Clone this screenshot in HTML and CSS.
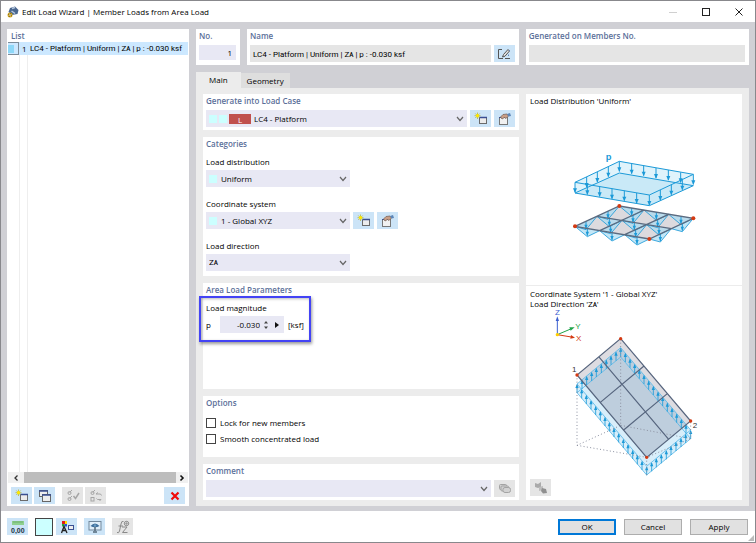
FILE: index.html
```html
<!DOCTYPE html>
<html lang="en">
<head>
<meta charset="utf-8">
<title>Edit Load Wizard | Member Loads from Area Load</title>
<link rel="stylesheet" href="styles.css">
</head>
<body>
<svg class="defs" aria-hidden="true">
  <defs>
    <marker id="down" markerUnits="userSpaceOnUse" markerWidth="12" markerHeight="34" refX="0" refY="0" overflow="visible"><path d="M0 0V30" stroke="#1c9ad8" stroke-width="3"/><path d="M-6 18H6L0 32Z" fill="#1c9ad8"/></marker>
    <marker id="drop" markerUnits="userSpaceOnUse" markerWidth="12" markerHeight="26" refX="0" refY="0" overflow="visible"><path d="M0 0V22" stroke="#1c9ad8" stroke-width="3"/><path d="M-5 10H5L0 23Z" fill="#1c9ad8"/></marker>
    <marker id="up" markerUnits="userSpaceOnUse" markerWidth="10" markerHeight="28" refX="0" refY="0" overflow="visible"><path d="M0 2V27" stroke="#1c9ad8" stroke-width="2.5"/><path d="M-5 12H5L0 0Z" fill="#1c9ad8"/></marker>
    <symbol id="new" viewBox="0 0 14 14"><rect x="5.5" y="5.5" width="7" height="6" fill="#ececec" stroke="#6b6b6b"/><path d="M5 5.500H13" stroke="#3a4f93" stroke-width="1.500"/><path d="M3.500 .5V7M.5 3.700H6.500M1.300 1.500L5.700 6M5.700 1.500L1.300 6" stroke="#b5b53c" stroke-width=".8"/><circle cx="3.500" cy="3.700" r="1.600" fill="#ffe900"/></symbol>
    <symbol id="edit" viewBox="0 0 14 14"><rect x="1.500" y="5.500" width="8" height="7" fill="#f1f1f1" stroke="#777"/><path d="M1 5.500H8" stroke="#3a4f93"/><path d="M2.500 5L5 2.500L9 2L10.500 4L8 6.500L6.500 5.500L4 7Z" fill="#c99e86" stroke="#6e5a50" stroke-width=".7"/><path d="M9 2L12 1L13 4L10.500 4.500Z" fill="#5d86b8"/></symbol>
    <symbol id="chev" viewBox="0 0 8 6"><path d="M1 1L4 4.500L7 1" fill="none" stroke="#666" stroke-width="1.200"/></symbol>
  </defs>
</svg>
<div class="window">
  <header class="titlebar">
    <svg class="app-icon" viewBox="0 0 12 12"><path d="M3 2L8 .5L11.500 4L10.500 8L5 9L1.500 6Z" fill="#49668f"/><path d="M5 2.500L8 1.500M4.500 5L8 7.500" stroke="#b5c7dd" stroke-width="1.500"/><circle cx="3" cy="9" r="2.500" fill="#d7ad27"/><path d="M1 8L5 10M4 7L2 11" stroke="#836713"/><circle cx="3" cy="9" r=".8" fill="#fff"/></svg>
    <h1>Edit Load Wizard | Member Loads from Area Load</h1>
    <div class="win-controls">
      <button aria-label="Minimize" disabled><svg viewBox="0 0 8 8"><path d="M0 4.500H8" stroke="#d0d0d0"/></svg></button>
      <button aria-label="Maximize"><svg viewBox="0 0 8 8"><rect x=".5" y=".5" width="7" height="7" fill="none" stroke="#222"/></svg></button>
      <button aria-label="Close"><svg viewBox="0 0 8 8"><path d="M.5 .5L7.500 7.500M7.500 .5L.5 7.500" stroke="#222"/></svg></button>
    </div>
  </header>

  <main class="content">
    <section class="list-panel">
      <h2>List</h2>
      <ul class="list">
        <li class="row"><span class="mark"></span><span class="num">1</span><span class="entry">LC4 - Platform | Uniform | Zᴀ | p : -0.030 ksf</span></li>
      </ul>
      <div class="scroll">
        <button aria-label="Scroll left"><svg viewBox="0 0 6 8"><path d="M4.500 1.500L2 4L4.500 6.500" fill="none" stroke="#333" stroke-width="1.300"/></svg></button>
        <div class="thumb"></div>
        <button aria-label="Scroll right"><svg viewBox="0 0 6 8"><path d="M1.500 1.500L4 4L1.500 6.500" fill="none" stroke="#111" stroke-width="1.600"/></svg></button>
      </div>
      <div class="toolbar">
        <button class="tool" aria-label="New"><svg><use href="#new"/></svg></button>
        <button class="tool" aria-label="Copy"><svg viewBox="0 0 14 14"><rect x="1.500" y="1.500" width="8" height="6" fill="#eee" stroke="#666"/><path d="M1 2H10" stroke="#3a4f93" stroke-width="1.500"/><rect x="4.500" y="5.500" width="8" height="7" fill="#eee" stroke="#666"/><path d="M4 6H13" stroke="#3a4f93" stroke-width="1.500"/></svg></button>
        <button class="tool off spaced" aria-label="Select all" disabled><svg viewBox="0 0 14 14" fill="none" stroke="#a5a5a5"><circle cx="3.500" cy="4" r="1.500"/><circle cx="3.500" cy="10" r="1.500"/><path d="M3.500 3.500L6 1M3.500 9.500L6 7"/><path d="M7.500 7L9.500 9.500L13 4" stroke-width="1.500"/></svg></button>
        <button class="tool off" aria-label="Invert selection" disabled><svg viewBox="0 0 14 14" fill="none" stroke="#a5a5a5"><circle cx="3.500" cy="4" r="1.500"/><path d="M3.500 3.500L6 1"/><rect x="2" y="8.500" width="3" height="3.500"/><path d="M7 5L9 3.500M7 5H11.500L12.500 6.500M7.500 9.500L8.500 10.500H12L10.500 12"/></svg></button>
        <button class="tool last" aria-label="Delete"><svg viewBox="0 0 14 14"><path d="M3.500 3.500L10.500 10.500M10.500 3.500L3.500 10.500" stroke="#f00a0a" stroke-width="2.200"/></svg></button>
      </div>
    </section>

    <div class="detail">
      <div class="head">
        <section class="card no"><h2><label for="no">No.</label></h2><input id="no" class="num-input" value="1"></section>
        <section class="card title-card"><h2><label for="name">Name</label></h2>
          <div class="line"><input id="name" class="readonly entry" value="LC4 - Platform | Uniform | Zᴀ | p : -0.030 ksf" readonly>
          <button class="tool" aria-label="Edit name"><svg viewBox="0 0 14 14" fill="none" stroke="#555"><path d="M5 2.500H1.500V11.500H6M8 11.500H13"/><path d="M5.500 10L6.500 7.500L11 2.500L12.500 4L8 9.200Z" fill="#e4e4e4"/><path d="M11.500 9V7.500M12.500 4V3" stroke="#6789b8"/></svg></button></div>
        </section>
        <section class="card members"><h2><label for="members">Generated on Members No.</label></h2><input id="members" class="readonly" readonly></section>
      </div>

      <nav class="tabs"><button class="tab active">Main</button><button class="tab">Geometry</button></nav>

      <div class="page">
        <div class="forms">
          <section class="card">
            <h2><label for="case">Generate into Load Case</label></h2>
            <div class="line">
              <div class="combo grow"><i class="sw"></i><i class="sw"></i><b class="badge">L</b><select id="case"><option>LC4 - Platform</option></select><svg><use href="#chev"/></svg></div>
              <button class="tool" aria-label="New load case"><svg><use href="#new"/></svg></button>
              <button class="tool" aria-label="Edit load case"><svg><use href="#edit"/></svg></button>
            </div>
          </section>
          <section class="card categories">
            <h2>Categories</h2>
            <div class="field"><label for="dist">Load distribution</label>
              <div class="combo"><i class="sw"></i><select id="dist"><option>Uniform</option></select><svg><use href="#chev"/></svg></div></div>
            <div class="field"><label for="cs">Coordinate system</label>
              <div class="line"><div class="combo"><i class="sw"></i><select id="cs"><option>1 - Global XYZ</option></select><svg><use href="#chev"/></svg></div>
              <button class="tool" aria-label="New coordinate system"><svg><use href="#new"/></svg></button>
              <button class="tool" aria-label="Edit coordinate system"><svg><use href="#edit"/></svg></button></div></div>
            <div class="field"><label for="dir">Load direction</label>
              <div class="combo"><select id="dir" class="entry"><option>Zᴀ</option></select><svg><use href="#chev"/></svg></div></div>
          </section>
          <section class="card params">
            <h2>Area Load Parameters</h2>
            <div class="magnitude">
              <div>Load magnitude</div>
              <div class="value"><label for="p">p</label>
                <div class="spin"><input id="p" value="-0.030"><button aria-label="Step"><svg viewBox="0 0 6 10"><path d="M1 3.500L3 1L5 3.500ZM1 6.500L3 9L5 6.500Z" fill="#444"/></svg></button><button aria-label="More"><svg viewBox="0 0 6 10"><path d="M1 2L5 5L1 8Z" fill="#111"/></svg></button></div>
                <span>[ksf]</span></div>
            </div>
          </section>
          <section class="card options">
            <h2>Options</h2>
            <label><input type="checkbox">Lock for new members</label>
            <label><input type="checkbox">Smooth concentrated load</label>
          </section>
          <section class="card">
            <h2><label for="comment">Comment</label></h2>
            <div class="line">
              <div class="combo grow"><select id="comment"><option></option></select><svg><use href="#chev"/></svg></div>
              <button class="tool off" aria-label="Comment library" disabled><svg viewBox="0 0 14 14" fill="#d2d2d2" stroke="#a3a3a3"><rect x="1.500" y="2.500" width="7" height="5" rx="1"/><rect x="3" y="4" width="7.500" height="5" rx="1"/><rect x="5" y="5.500" width="7.500" height="5" rx="2"/></svg></button>
            </div>
          </section>
        </div>

        <aside class="preview">
          <figure class="dist">
            <figcaption>Load Distribution 'Uniform'</figcaption>
            <svg viewBox="0 0 450 315">
              <text x="137" y="45" class="p">p</text>
              <g fill="none" stroke="#1c9ad8" stroke-width="3">
                <path d="M45 112L178 49L400 88V122L268 182L45 144Z" fill="#e0f3fb" stroke="none"/>
                <path d="M45 144L178 84L400 122L268 182Z" fill="#c9e9f7"/>
                <path d="M45 112L178 49L400 88L268 150Z"/>
                <path d="M45 112L80 96L112 81L145 65L178 49L215 56L251 62L288 69L325 75L362 82L400 88L367 104L334 119L301 135L268 150L230 144L193 137L156 131L119 124L82 118Z" stroke="none" marker-start="url(#down)" marker-mid="url(#down)"/>
              </g>
              <path d="M45 244L178 183L400 220L268 282Z" fill="#dcdade"/>
              <path d="M178 183L215 214L252 195L289 226L326 208L363 239L400 220M111 214L148 245L186 226L223 257L260 239L297 270L334 251M45 244L82 275L119 257L156 288L194 269L231 300L268 282M45 244L78 254L111 214L144 223L178 183M119 257L152 266L186 226L219 235L252 195M194 269L227 279L260 239L293 248L326 208M268 282L301 291L334 251L367 260L400 220" fill="#a9dcf2" fill-opacity=".7" stroke="#1c9ad8" stroke-width="2.500"/>
              <path d="M215 189L289 201L363 214L148 220L223 232L297 245L82 250L156 263L231 275L78 229L144 198L152 241L219 210L227 254L293 223L301 266L367 235" fill="none" marker-start="url(#drop)" marker-mid="url(#drop)" marker-end="url(#drop)"/>
              <path d="M45 244L178 183L400 220L268 282ZM111 214L334 251M119 257L252 195M194 269L326 208" fill="none" stroke="#5b6b80" stroke-width="4"/>
              <g fill="#d43a12"><circle cx="45" cy="244" r="6"/><circle cx="178" cy="183" r="6"/><circle cx="400" cy="220" r="6"/><circle cx="268" cy="282" r="6"/></g>
            </svg>
          </figure>
          <figure class="coord">
            <figcaption>Coordinate System '1 - Global XYZ'<br>Load Direction <span class="entry">'Zᴀ'</span></figcaption>
            <svg viewBox="0 -60 480 510">
              <path d="M22 26V-20" stroke="#3c5fd0" stroke-width="3"/><path d="M17 -15H27L22 -29Z" fill="#3c5fd0"/>
              <path d="M22 26L62 9" stroke="#1fa34a" stroke-width="3"/><path d="M58 4L62 14L74 4Z" fill="#1fa34a"/>
              <path d="M22 26L64 33" stroke="#d43a12" stroke-width="3"/><path d="M63 27L61 38L75 35Z" fill="#d43a12"/>
              <circle cx="22" cy="26" r="5" fill="#ffcf00"/>
              <text x="15" y="-33" fill="#3c5fd0">Z</text><text x="76" y="8" fill="#1fa34a">Y</text><text x="78" y="45" fill="#d43a12">X</text>
              <path d="M212 65L422 312V338L290 447L81 200V174Z" fill="#d8eefa"/>
              <path d="M212 38L422 285L290 394L81 147Z" fill="#645f78" fill-opacity=".22"/>
              <g fill="none" stroke="#59b8e8" stroke-width="2.500">
                <path d="M212 65L422 312L290 421L81 174ZM212 93L422 338L290 447L81 200Z"/>
                <path d="M212 65L198 77L183 89L169 101L154 114L139 126L125 138L110 150L96 162L81 174L95 190L109 207L123 223L137 240L151 256L165 273L178 289L192 306L206 322L220 339L234 355L248 372L262 388L276 405L290 421L305 409L319 397L334 385L349 373L363 360L378 348L393 336L407 324L422 312L408 296L394 279L380 263L366 246L352 230L338 213L324 197L310 180L296 164L282 147L268 131L254 114L240 98L226 81" stroke="none" marker-start="url(#up)" marker-mid="url(#up)" marker-end="url(#up)"/>
              </g>
              <path d="M81 147V358L212 298V38M212 298L422 338V285M81 358L290 394L422 338M290 394V447" fill="none" stroke="#8b90a0" stroke-width="3" stroke-dasharray="3 7"/>
              <path d="M212 38L422 285L290 394L81 147ZM146 92L356 340M282 120L151 229M352 203L221 312" fill="none" stroke="#56657e" stroke-width="3.500"/>
              <g fill="#d43a12"><circle cx="212" cy="38" r="5"/><circle cx="81" cy="147" r="5"/><circle cx="422" cy="285" r="5"/><circle cx="290" cy="394" r="5"/></g>
              <text x="66" y="138" fill="#333">1</text><text x="428" y="307" fill="#333">2</text>
            </svg>
            <button class="tool off" aria-label="Preview settings" disabled><svg viewBox="0 0 14 14"><path d="M1 2L4 3L7 1V6L4 7L1 6Z" fill="#aaa"/><path d="M5 6L9 5V9L5 10Z" fill="#bdbdbd"/><path d="M8 7L12 8L13 12L9 12.500L7 10Z" fill="#8f8f8f"/></svg></button>
          </figure>
        </aside>
      </div>
    </div>
  </main>

  <footer class="footer">
    <button class="tool" aria-label="Units"><svg class="wide" viewBox="0 0 16 14"><rect x="2" y="1" width="12" height="4" fill="#8fd08f"/><path d="M4 1V3M6 1V3M8 1V3M10 1V3M12 1V3" stroke="#5c9c5c" stroke-width=".6"/><text x="1" y="13" class="units">0,00</text></svg></button>
    <button class="color" aria-label="Color"></button>
    <button class="tool" aria-label="Display"><svg viewBox="0 0 14 14"><path d="M2 1H5V4H2Z" fill="#e01818"/><path d="M5 1H7V4H5Z" fill="#ffe000"/><path d="M2 4H4.500V6.500H2Z" fill="#25a535"/><path d="M4.500 4H7V6.500H4.500Z" fill="#2850d8"/><path d="M1.500 13L4 6.500L7 13M2.500 10.500H6" fill="none" stroke="#222" stroke-width="1.300"/><rect x="8.500" y="5.500" width="5" height="4" fill="#eee" stroke="#3a4f93"/></svg></button>
    <button class="tool spaced" aria-label="View"><svg viewBox="0 0 14 14"><rect x="1" y="1.500" width="12" height="8.500" fill="#dfeefa" stroke="#71879c"/><path d="M2.500 6Q7 1 11.500 6Q7 8.500 2.500 6Z" fill="#3b6c9a"/><circle cx="7" cy="5.500" r="1.300" fill="#6a9cc4"/><path d="M7 7V11M5 12H9" stroke="#53687a" stroke-width="1.500"/></svg></button>
    <button class="tool off spaced" aria-label="Formula" disabled><svg viewBox="0 0 14 14" fill="none" stroke="#8a8a8a"><path d="M7.500 1.500Q5.500 .5 5 4L3.500 11Q3 13.500 1 12.500M2.500 6H7"/><path d="M6 7H11L6.500 12.500H11.500"/><circle cx="10.500" cy="3.500" r="2.200"/><path d="M8.500 3.500H12.500M10.500 1.500V5.500" stroke-width=".6"/></svg></button>
    <div class="actions"><button class="ok">OK</button><button>Cancel</button><button>Apply</button></div>
    <i class="grip"></i>
  </footer>
</div>
</body>
</html>
```
FILE: styles.css
```css
* { box-sizing: border-box; }
body { margin: 0; font: 500 8px/12px "Open Sans", "Noto Sans", sans-serif; color: #000; }
button, input, select { font: inherit; color: inherit; margin: 0; padding: 0; border: 0; border-radius: 0; background: none; min-width: 0; }
h1, h2, ul, figure { margin: 0; padding: 0; }
h2 { font-size: 8px; line-height: 12px; font-weight: 600; color: #5b6f99; }
svg { display: block; }
.defs { position: absolute; width: 0; height: 0; }

.window { display: flex; flex-direction: column; min-height: 100vh; border: 1px solid #88888c; background: #fff; }
.titlebar { display: flex; align-items: center; height: 21px; padding: 0 8px 0 6px; }
.app-icon { width: 12px; height: 12px; margin-right: 3px; }
h1 { flex: 1; font-size: 8px; font-weight: 500; }
.win-controls { display: flex; gap: 17px; }
.win-controls button { width: 16px; height: 16px; display: grid; place-items: center; }
.win-controls svg { width: 8px; height: 8px; }

.content { flex: 1; display: flex; gap: 7px; padding: 7px 6px 5px; background: #d0d0d5; }
.list-panel { flex: 0 0 182px; min-width: 0; display: flex; flex-direction: column; padding: 1px 1px 2px; background: #fff; }
.list-panel h2 { padding-left: 3px; }
.list { flex: 1; list-style: none; background: linear-gradient(90deg, transparent 11px, #eee 11px, #eee 12px, transparent 12px, transparent 19px, #eee 19px, #eee 20px, transparent 20px); }
.row { display: flex; align-items: center; height: 13px; overflow: hidden; background: #cce8ff; white-space: nowrap; }
.mark { flex: none; width: 11px; height: 13px; border: 1px solid #7d8c99; border-left: 0; background: #cce8ff linear-gradient(#8ed8f8, #8ed8f8) 0 2px / 6px 8px no-repeat; }
.num { flex: none; width: 11px; padding-left: 3px; }
.entry { font-family: Roboto, "Noto Sans", sans-serif; font-weight: 400; }
.scroll { display: flex; height: 11px; background: #f0f0f0; }
.scroll button { width: 16px; display: grid; place-items: center; }
.scroll button:last-child { width: 12px; }
.scroll svg { width: 6px; height: 8px; }
.thumb { flex: 1; background: #bdbdbd; }
.toolbar { display: flex; gap: 2px; padding: 4px 3px 0; }
.tool { flex: none; width: 21px; height: 17px; display: grid; place-items: center; background: #cce4f7; }
.tool svg { width: 14px; height: 14px; }
.tool svg.wide { width: 16px; }
.tool.off { background: #e5e5e5; }
.toolbar .spaced { margin-left: 5px; }
.toolbar .last { margin-left: auto; }

.detail { flex: 1; min-width: 0; display: flex; flex-direction: column; }
.head { display: flex; gap: 7px; }
.card { padding: 1px 4px 3px 3px; background: #fff; }
.card h2 { margin-bottom: 3px; }
.head input { display: block; width: 100%; }
.no { flex: 0 0 44px; }
.title-card { flex: 273 1 0; }
.members { flex: 223 1 0; }
.num-input { height: 15px; padding-right: 4px; text-align: right; background: #e8e8f4; }
.readonly { height: 17px; padding: 0 3px; background: #e5e5e5; }
.line { display: flex; gap: 3px; }

.tabs { display: flex; align-items: flex-end; height: 23px; }
.tab { height: 15px; padding: 0 6px; background: #dedede; }
.tab.active { height: 16px; padding: 0 13px; background: #ececec; }
.page { flex: 1; display: flex; gap: 7px; padding: 6px 7px 6px; background: #ececec; }
.forms { flex: 316 1 0; display: flex; flex-direction: column; gap: 7px; min-width: 0; }
.combo { position: relative; display: flex; align-items: center; width: 144px; height: 17px; padding-left: 3px; background: #e8e8f4; }
.combo.grow { flex: 1; }
.combo select { flex: 1; height: 17px; padding-right: 14px; appearance: none; }
.combo svg { position: absolute; right: 3px; width: 8px; height: 6px; pointer-events: none; }
.sw { width: 8px; height: 8px; margin-right: 2px; background: #ccffff; }
.sw + select { margin-left: 2px; }
.badge { width: 22px; height: 10px; margin-right: 3px; font-weight: 400; line-height: 11px; text-align: center; color: #fff; background: #c0504d; }
.categories { padding-bottom: 5px; }
.card.categories h2, .card.params h2 { margin-bottom: 6px; }
.field { display: flex; flex-direction: column; gap: 2px; }
.field + .field { margin-top: 11px; }
.params { flex: 1; }
.magnitude { position: relative; width: 98px; }
.magnitude::after { content: ""; position: absolute; inset: -6px -7px -9px; border: 2px solid #4343f5; box-shadow: 1px 2px 3px #0006, inset 1px 1px 3px #0004; pointer-events: none; }
.value { display: flex; align-items: center; height: 17px; margin-top: 2px; }
.value label { width: 14px; }
.spin { display: flex; align-items: center; width: 64px; height: 17px; margin-right: 4px; background: #e8e8f4; }
.spin input { width: 40px; text-align: right; }
.spin button { width: 10px; margin-left: 1px; display: grid; place-items: center; }
.spin svg { width: 6px; height: 10px; }
.options { padding-bottom: 10px; }
.card.options h2 { margin-bottom: 6px; }
.options label { display: flex; align-items: center; gap: 4px; height: 16px; }
.options input { appearance: none; width: 10px; height: 10px; border: 1px solid #444; background: #fff; }

.preview { flex: 216 1 0; display: flex; flex-direction: column; background: #fff; }
figure { padding: 1px 4px 4px; }
.dist { flex: 0 0 192px; border-bottom: 1px solid #ececec; }
.dist svg { width: 150px; height: 105px; margin: 38px 0 0 30px; }
.coord { flex: 1; display: flex; flex-direction: column; padding-top: 3px; }
.coord figcaption { line-height: 10px; }
.coord > svg { width: 160px; height: 170px; margin: -4px 0 0 20px; }
.coord .tool { margin-top: auto; }
.preview text { font: 24px "Liberation Sans", sans-serif; }
.preview text.p { font-size: 28px; font-weight: 700; fill: #1c9ad8; }

.footer { position: relative; display: flex; align-items: center; height: 31px; padding: 0 7px 0 6px; gap: 3px; }
.color { width: 18px; height: 18px; margin-left: 4px; border: 1px solid #444; background: #ccffff; }
.footer .spaced { margin-left: 4px; }
.units { font: 700 7px "Liberation Sans", sans-serif; fill: #234; }
.actions { display: flex; gap: 8px; margin-left: auto; }
.actions button { width: 58px; height: 16px; border: 1px solid #adadad; background: #e1e1e1; }
.actions .ok { border: 2px solid #0078d7; }
.grip { position: absolute; right: 1px; bottom: 1px; width: 6px; height: 6px; background: radial-gradient(#bbb 1px, transparent 1px) 0 0 / 2px 2px; clip-path: polygon(100% 0, 100% 100%, 0 100%); }
```
